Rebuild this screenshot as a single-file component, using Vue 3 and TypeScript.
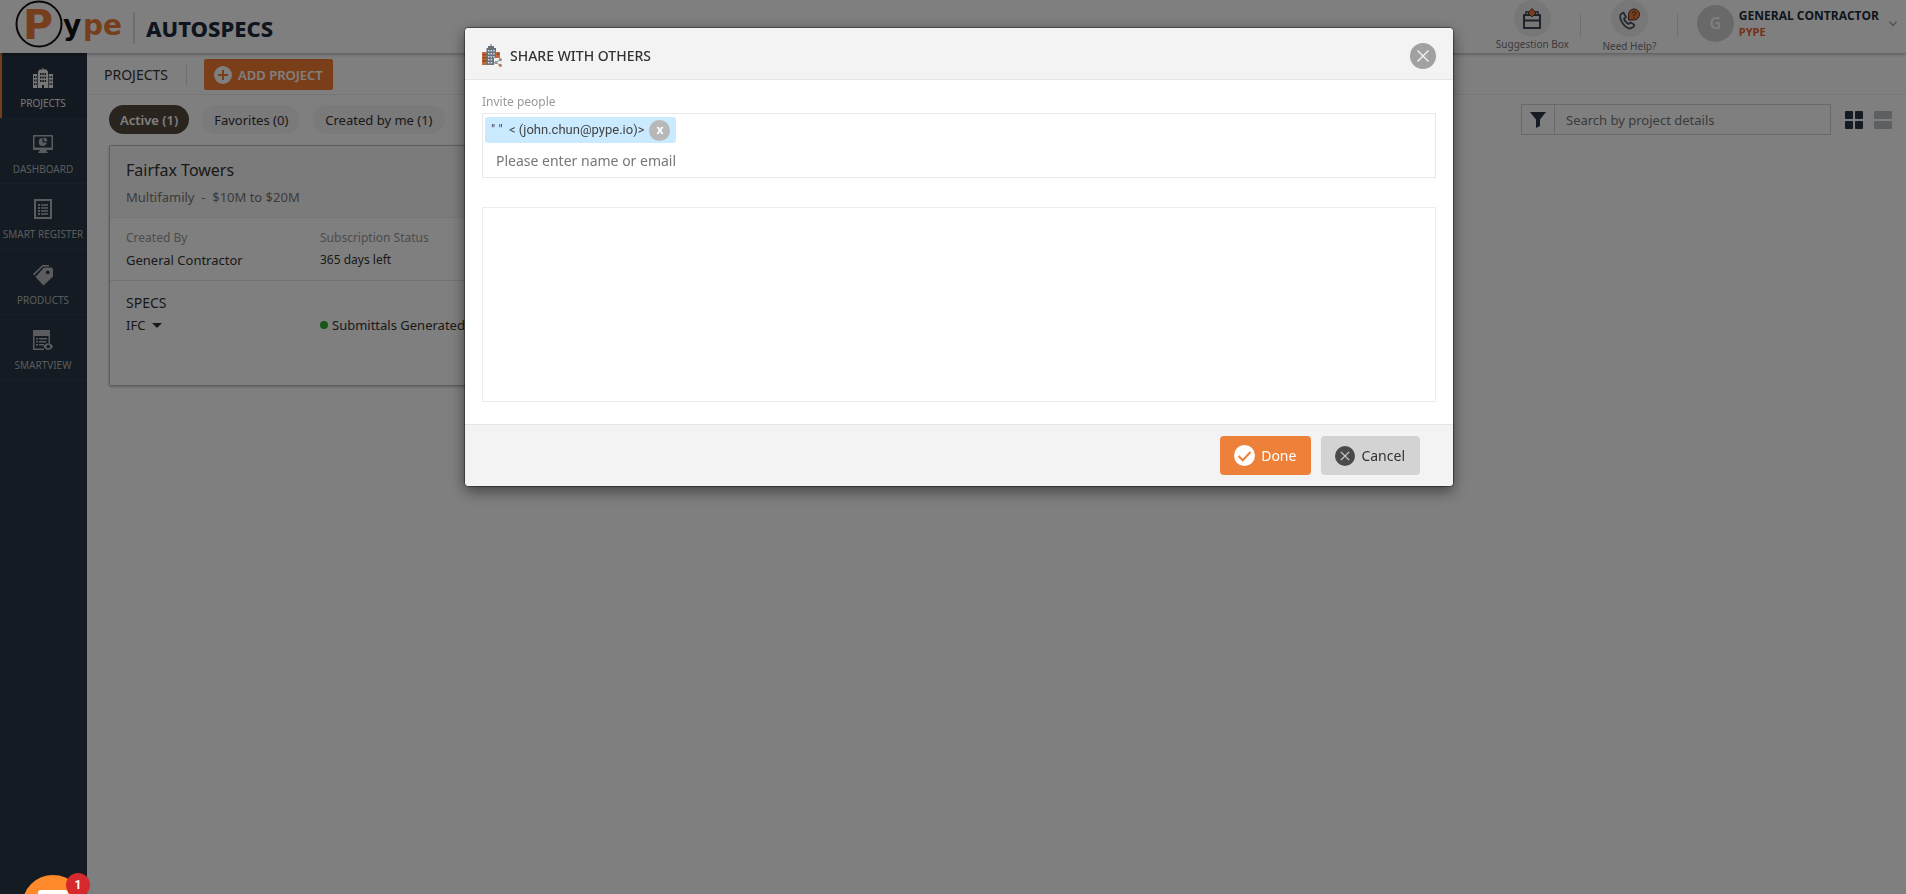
<script setup lang="ts">
import { ref } from 'vue'

interface NavItem {
  id: string
  label: string
}

const navItems: NavItem[] = [
  { id: 'projects', label: 'PROJECTS' },
  { id: 'dashboard', label: 'DASHBOARD' },
  { id: 'register', label: 'SMART REGISTER' },
  { id: 'products', label: 'PRODUCTS' },
  { id: 'smartview', label: 'SMARTVIEW' },
]
const activeNav = ref('projects')

const filters = ['Active (1)', 'Favorites (0)', 'Created by me (1)']
const activeFilter = ref('Active (1)')

const search = ref('')
const invitee = ref('')
const message = ref('')
const people = ref<string[]>(['" "\u00a0 < (john.chun@pype.io)>'])
const open = ref(true)

function removePerson(index: number): void {
  people.value.splice(index, 1)
}
</script>

<template>
  <div class="app">
    <header class="topbar">
      <a class="logo" href="#" aria-label="Pype">
        <svg width="110" height="52" viewBox="0 0 110 52">
          <circle cx="24" cy="24" r="22.5" fill="#fff" stroke="#111" stroke-width="2" />
          <text x="8" y="39" class="logo-p">P</text>
          <text x="48" y="35" class="logo-y">y</text>
          <text x="68" y="35" class="logo-pe">pe</text>
        </svg>
      </a>
      <span class="brand">AUTOSPECS</span>
      <div class="top-actions">
        <button class="top-action suggestion" type="button">
          <span class="round">
            <svg width="20" height="22" viewBox="0 0 20 22" fill="none" stroke="#3a4654" stroke-width="2">
              <path d="M2 7h16v13H2z M2 12.500h16" stroke-linejoin="round" />
              <path d="M4 7V4h12v3" stroke-width="1.500" />
              <path d="M10 0.500l4 4.500-4 4-4-4z" fill="#ed7d3a" stroke="#5a3a2a" stroke-width="1" />
            </svg>
          </span>
          <span>Suggestion Box</span>
        </button>
        <button class="top-action help" type="button">
          <span class="round">
            <svg width="22" height="22" viewBox="0 0 22 22" fill="none">
              <path
                d="M5.500 4.500L2.500 6.500C1 11 6 20 12.500 20.500L16 18.500V16.500L12.500 14.500L10.500 16C8.500 15 6.500 12.500 6 10.500L8 9Z"
                stroke="#4a5563" stroke-width="1.800" stroke-linejoin="round" />
              <path d="M10.500 12V6.500A5.500 5.500 0 1 1 16 12z" fill="#ed7d3a" stroke="#4a3a34" stroke-width="1" />
              <path d="M14.500 5.200c0-2.200 3.200-2.200 3.200 0 0 1.300-1.600 1.100-1.600 2.600M16.100 9v1.200" stroke="#3a2a24" />
            </svg>
          </span>
          <span>Need Help?</span>
        </button>
        <button class="account" type="button">
          <span class="avatar">G</span>
          <span class="who"><b>GENERAL CONTRACTOR</b><em>PYPE</em></span>
          <svg width="10" height="8" viewBox="0 0 10 8" fill="none" stroke="#aaa" stroke-width="1.500">
            <path d="M1.500 1.500L5 5.500L8.500 1.500" />
          </svg>
        </button>
      </div>
    </header>

    <div class="shell">
      <nav class="sidebar">
        <div class="nav-list">
          <a v-for="item in navItems" :key="item.id" href="#" class="nav-item" :class="{ on: item.id === activeNav }"
            @click.prevent="activeNav = item.id">
            <svg width="20" height="20" viewBox="0 0 20 20">
              <g v-if="item.id === 'projects'" fill="currentColor" fill-rule="evenodd">
                <path
                  d="M9.500 0h1v1.500h3.500v1.500h1V20H11v-3H9v3H5V3h1V1.500h3.500z M7 5v2h1.500V5z M9.300 5v2h1.500V5z M11.600 5v2h1.500V5z M7 8.500v2h1.500v-2z M9.300 8.500v2h1.500v-2z M11.600 8.500v2h1.500v-2z M7 12v2h1.500v-2z M9.300 12v2h1.500v-2z M11.600 12v2h1.500v-2z" />
                <path d="M0 6h4.300v14H0z M1 8v2h1v-2z M2.700 8v2h1v-2z M1 11.500v2h1v-2z M2.700 11.500v2h1v-2z M1 15v2h1v-2z M2.700 15v2h1v-2z" />
                <path d="M15.700 6H20v14h-4.300z M16.500 8v2h1v-2z M18.200 8v2h1v-2z M16.500 11.500v2h1v-2z M18.200 11.500v2h1v-2z M16.500 15v2h1v-2z M18.200 15v2h1v-2z" />
              </g>
              <g v-else-if="item.id === 'dashboard'" fill="currentColor">
                <path fill-rule="evenodd" d="M1 1h18a1 1 0 0 1 1 1v13a1 1 0 0 1-1 1H1a1 1 0 0 1-1-1V2a1 1 0 0 1 1-1z M1.500 2.500v11h17v-11z" />
                <path d="M9.500 4a4 4 0 1 0 4.200 4.500H9.500z M10.700 3.500V7.300h3.700A4 4 0 0 0 10.700 3.500z M7 16h6l2 3H5z" />
              </g>
              <g v-else-if="item.id === 'register'" fill="currentColor">
                <path fill-rule="evenodd" d="M1 0h18v20H1z M3 2v16h14V2z" />
                <path d="M5 5h2v2H5z M8 5.300h7v1.400H8z M5 8h2v2H5z M8 8.300h7v1.400H8z M5 11h2v2H5z M8 11.300h7v1.400H8z M5 14h2v2H5z M8 14.300h7v1.400H8z" />
              </g>
              <g v-else-if="item.id === 'products'" fill="currentColor">
                <path fill-rule="evenodd" d="M11 2.500h7.500L20 4v7.500L10.500 20.500L2.500 12z M14.700 5.500a1.900 1.900 0 1 0 .1 0z" />
                <path d="M9.500 0H16v1.400h-5.800L1.800 9.800L2.500 11.200L0 9z" />
              </g>
              <g v-else fill="currentColor">
                <path fill-rule="evenodd" d="M0 0h17v13h-1.500V6h-14v12.500H11V20H0z" />
                <path d="M3 8h2v1.600H3z M6 8h8v1.600H6z M3 11h2v1.600H3z M6 11h7v1.600H6z M3 14h2v1.600H3z M6 14h5v1.600H6z" />
                <path fill-rule="evenodd" d="M10.500 16.500c2-4.500 7.500-4.500 9.500 0c-2 4.500-7.500 4.500-9.500 0z M15.200 14.700a1.800 1.800 0 1 0 .1 0z" />
              </g>
            </svg>
            <span>{{ item.label }}</span>
          </a>
        </div>
      </nav>

      <main class="main">
        <div class="subbar">
          <h1>PROJECTS</h1>
          <button class="add" type="button">
            <svg width="18" height="18" viewBox="0 0 18 18">
              <circle cx="9" cy="9" r="9" fill="#fff" />
              <path d="M9 4v10M4 9h10" stroke="#ed7d3a" stroke-width="2" />
            </svg>
            ADD PROJECT
          </button>
        </div>

        <div class="tools">
          <div class="pills">
            <button v-for="name in filters" :key="name" type="button" class="pill" :class="{ on: name === activeFilter }"
              @click="activeFilter = name">{{ name }}</button>
          </div>
          <div class="find">
            <div class="search">
              <button type="button" aria-label="Filter">
                <svg width="16" height="16" viewBox="0 0 16 16"><path d="M0 0h16L10 7.500V14l-4 2V7.500z" fill="#283646" /></svg>
              </button>
              <input v-model="search" type="text" placeholder="Search by project details" aria-label="Search projects" />
            </div>
            <button class="view" type="button" aria-label="Grid view">
              <svg width="18" height="18" viewBox="0 0 18 18" fill="#283646">
                <rect width="8" height="8" rx="1" /><rect x="10" width="8" height="8" rx="1" />
                <rect y="10" width="8" height="8" rx="1" /><rect x="10" y="10" width="8" height="8" rx="1" />
              </svg>
            </button>
            <button class="view" type="button" aria-label="List view">
              <svg width="18" height="18" viewBox="0 0 18 18" fill="#bbbfc3">
                <rect width="18" height="8" rx="1" /><rect y="10" width="18" height="8" rx="1" />
              </svg>
            </button>
          </div>
        </div>

        <article class="card">
          <div class="card-head">
            <h2>Fairfax Towers</h2>
            <p>Multifamily&nbsp; -&nbsp; $10M to $20M</p>
          </div>
          <dl class="meta">
            <div><dt>Created By</dt><dd>General Contractor</dd></div>
            <div><dt>Subscription Status</dt><dd class="small">365 days left</dd></div>
          </dl>
          <h3>SPECS</h3>
          <div class="spec">
            <button type="button">IFC <i class="caret"></i></button>
            <span class="status"><i class="dot"></i>Submittals Generated</span>
          </div>
        </article>
      </main>
    </div>

    <div v-if="open" class="overlay">
      <form class="modal" role="dialog" aria-labelledby="share-title" @submit.prevent="open = false">
        <header class="modal-head">
          <svg width="20" height="23" viewBox="0 0 20 23">
            <path d="M0 8h6v13H0z M13 8h5v6h-5z" fill="#c5693a" />
            <path d="M1 10h1.500v1.500H1z M3.300 10h1.500v1.500H3.300z M1 13h1.500v1.500H1z M3.300 13h1.500v1.500H3.300z M1 16h1.500v1.500H1z M3.300 16h1.500v1.500H3.300z M15 9.500h2V11h-2z" fill="#5b4238" />
            <path d="M8.500 0h1v2H12v2h2v17H4.500V4H6V2h2.500z" fill="#67727d" />
            <path d="M6 6h1.500v1.500H6z M8.600 6h1.500v1.500H8.600z M11.200 6h1.500v1.500h-1.500z M6 9h1.500v1.500H6z M8.600 9h1.500v1.500H8.600z M11.200 9h1.500v1.500h-1.500z M6 12h1.500v1.500H6z M8.600 12h1.500v1.500H8.600z M11.200 12h1.500v1.500h-1.500z M6 15h1.500v1.500H6z M8.600 15h1.500v1.500H8.600z M6 18h1.500v1.500H6z M8.600 18h1.500v1.500H8.600z" fill="#d5dade" />
            <path d="M12 14h8v9h-8z" fill="#f3f3f3" />
            <path d="M18.500 15.500L14 18.500L18.500 21.500" fill="none" stroke="#999" />
            <circle cx="18.300" cy="15.700" r="1.600" fill="#8b9095" /><circle cx="13.800" cy="18.500" r="1.600" fill="#8b9095" /><circle cx="18.300" cy="21.300" r="1.600" fill="#b37a5d" />
          </svg>
          <h2 id="share-title">SHARE WITH OTHERS</h2>
          <button class="close" type="button" aria-label="Close" @click="open = false">
            <svg width="26" height="26" viewBox="0 0 26 26">
              <circle cx="13" cy="13" r="13" fill="#a1a1a1" />
              <path d="M7.500 7.500l11 11M18.500 7.500l-11 11" stroke="#f3f3f3" stroke-width="1.400" />
            </svg>
          </button>
        </header>
        <div class="modal-body">
          <label for="invite">Invite people</label>
          <div class="tags">
            <span v-for="(person, i) in people" :key="person" class="tag">
              {{ person }}
              <button type="button" aria-label="Remove" @click="removePerson(i)">x</button>
            </span>
            <input id="invite" v-model="invitee" type="text" placeholder="Please enter name or email" />
          </div>
          <textarea v-model="message" aria-label="Message"></textarea>
        </div>
        <footer class="modal-foot">
          <button class="btn done" type="submit">
            <svg width="21" height="21" viewBox="0 0 21 21">
              <circle cx="10.500" cy="10.500" r="10.500" fill="#fff" />
              <path d="M4.500 11l4.200 4.200L16.500 7" fill="none" stroke="#ed813a" stroke-width="2" />
            </svg>
            Done
          </button>
          <button class="btn cancel" type="button" @click="open = false">
            <svg width="20" height="20" viewBox="0 0 20 20">
              <circle cx="10" cy="10" r="10" fill="#4a4a4a" />
              <path d="M5.800 5.800l8.400 8.400M14.200 5.800l-8.400 8.400" stroke="#d3d3d3" stroke-width="1.200" />
            </svg>
            Cancel
          </button>
        </footer>
      </form>
    </div>

    <button class="chat" type="button" aria-label="Open chat">
      <svg width="62" height="62" viewBox="0 0 62 62">
        <circle cx="31" cy="31" r="31" fill="#ff8a2b" />
        <rect x="16" y="15" width="30" height="26" rx="3" fill="#fff" />
      </svg>
      <span class="badge">1</span>
    </button>
  </div>
</template>

<style>
html,
body {
  overflow: hidden;
}
</style>

<style scoped>
* {
  box-sizing: border-box;
}

.app {
  display: flex;
  flex-direction: column;
  min-height: 100vh;
  background: #fff;
  color: #333;
  font: 13px/18px "Noto Sans", "Open Sans", sans-serif;
}

h1,
h2,
h3,
p,
dl,
dd {
  margin: 0;
  font-weight: 400;
}

button {
  padding: 0;
  border: 0;
  background: none;
  color: inherit;
  font: inherit;
  cursor: pointer;
}

a {
  color: inherit;
  text-decoration: none;
}

svg {
  display: block;
  flex: none;
}

.topbar {
  position: relative;
  display: flex;
  align-items: flex-start;
  height: 53px;
  padding: 0 8px 0 15px;
  background: #fff;
  box-shadow: 0 1px 4px rgba(0, 0, 0, 0.35);
}

.logo-p,
.logo-y,
.logo-pe {
  fill: #ed7d3a;
  font-family: "DejaVu Sans", sans-serif;
  font-size: 41px;
  font-weight: 700;
}

.logo-y,
.logo-pe {
  font-size: 28px;
}

.logo-y {
  fill: #111;
}

.brand {
  margin: 12px 0 0 8px;
  padding-left: 11px;
  border-left: 2px solid #ddd;
  color: #1e2a3c;
  font-size: 22px;
  font-weight: 800;
  line-height: 32px;
}

.top-actions {
  display: flex;
  margin-left: auto;
}

.top-action {
  display: flex;
  flex-direction: column;
  align-items: center;
  position: relative;
  width: 97px;
  color: #777;
  font-size: 10px;
  line-height: 14px;
}

.top-action::after {
  content: "";
  position: absolute;
  top: 14px;
  right: 0;
  height: 22px;
  border-right: 1px solid #ddd;
}

.round {
  display: grid;
  place-items: center;
  width: 37px;
  height: 37px;
  border-radius: 50%;
  background: #eee;
}

.help .round {
  margin-bottom: 2px;
}

.account {
  display: flex;
  align-items: center;
  gap: 5px;
  height: 37px;
  margin: 5px 0 0 19px;
  text-align: left;
}

.account svg {
  margin-left: 4px;
}

.avatar {
  width: 37px;
  border-radius: 50%;
  background: #d3d3d3;
  color: #fff;
  font-size: 16px;
  font-weight: 600;
  line-height: 37px;
  text-align: center;
}

.who {
  display: flex;
  flex-direction: column;
  font-family: "Open Sans", sans-serif;
  font-size: 12px;
  line-height: 16px;
}

.who b {
  color: #222b38;
  font-weight: 700;
}

.who em {
  color: #e8622c;
  font-size: 11px;
  font-style: normal;
  font-weight: 700;
}

.shell {
  display: flex;
  flex: 1;
}

.sidebar {
  width: 87px;
  background: #283644;
}

.nav-list {
  display: grid;
  grid-template-rows: repeat(5, 1fr);
  height: 328px;
}

.nav-item {
  display: flex;
  flex-direction: column;
  align-items: center;
  gap: 6px;
  padding: 15px 1px 0 0;
  border-bottom: 1px solid #303f4f;
  color: #b4b8bc;
  font-size: 10px;
  white-space: nowrap;
}

.nav-item.on {
  box-shadow: inset 2px 0 #ed7d3a;
  background: #253341;
  color: #eee;
}

.main {
  flex: 1;
  min-width: 0;
}

.subbar {
  display: flex;
  align-items: center;
  height: 42px;
  padding: 2px 0 0 17px;
  border-bottom: 1px solid #eee;
}

.subbar h1 {
  margin-right: 17px;
  padding-right: 18px;
  border-right: 1px solid #ddd;
  font-size: 14px;
  line-height: 22px;
}

.add {
  display: flex;
  align-items: center;
  gap: 6px;
  height: 31px;
  padding: 0 10px;
  border-radius: 2px;
  background: #f47d33;
  color: #fff;
  font-weight: 600;
}

.tools {
  display: flex;
  align-items: center;
  justify-content: space-between;
  padding: 9px 14px 10px 22px;
}

.pills {
  display: flex;
  gap: 13px;
}

.pill {
  height: 29px;
  padding: 0 12px;
  border-radius: 15px;
  background: #f4f4f4;
}

.pill.on {
  padding: 0 11px;
  background: #54483f;
  color: #fff;
  font-weight: 600;
}

.find {
  display: flex;
  align-items: center;
  gap: 11px;
}

.search {
  display: flex;
  width: 310px;
  height: 31px;
  margin-right: 3px;
  border: 1px solid #d3d3d3;
}

.search button {
  display: grid;
  place-items: center;
  width: 33px;
  border-right: 1px solid #d3d3d3;
}

.search input {
  flex: 1;
  min-width: 0;
  padding: 0 11px;
  border: 0;
  background: none;
  font: inherit;
}

.search input::placeholder {
  color: #777;
}

.card {
  width: 560px;
  height: 241px;
  margin-left: 22px;
  border: 1px solid #bbb;
  border-radius: 2px;
  box-shadow: 0 1px 3px rgba(0, 0, 0, 0.25);
}

.card-head {
  height: 72px;
  padding: 14px 16px;
  border-bottom: 1px solid #eee;
  background: #f6f6f6;
}

.card-head h2 {
  margin-bottom: 7px;
  font-size: 16px;
  line-height: 21px;
}

.card-head p {
  color: #777;
}

.meta {
  display: flex;
  height: 63px;
  padding: 11px 16px;
  border-bottom: 1px solid #e5e5e5;
}

.meta > div {
  width: 194px;
}

.meta dt {
  margin-bottom: 4px;
  color: #999;
  font-size: 12px;
}

.small {
  font-size: 12px;
}

.card h3 {
  margin: 13px 16px 4px;
  font-size: 14px;
}

.spec {
  display: flex;
  padding: 0 16px;
}

.spec button {
  width: 194px;
  text-align: left;
}

.caret {
  display: inline-block;
  margin: 0 0 2px 3px;
  border: 5px solid transparent;
  border-top-color: #333;
  border-bottom: 0;
}

.status {
  display: flex;
  align-items: center;
  gap: 4px;
}

.dot {
  width: 8px;
  height: 8px;
  border-radius: 50%;
  background: #2cae2c;
}

.overlay {
  position: fixed;
  inset: 0;
  display: flex;
  align-items: flex-start;
  justify-content: center;
  padding: 28px 0 0 12px;
  background: rgba(0, 0, 0, 0.5);
}

.modal {
  width: min(988px, 100% - 40px);
  border-radius: 4px;
  background: #fff;
  box-shadow: 0 0 1px 1px rgba(0, 0, 0, 0.4), 0 5px 15px rgba(0, 0, 0, 0.5);
}

.modal-head {
  display: flex;
  align-items: center;
  gap: 8px;
  height: 52px;
  padding: 4px 17px 0;
  border-bottom: 1px solid #e5e5e5;
  border-radius: 4px 4px 0 0;
  background: #f3f3f3;
}

.modal-head h2 {
  font-size: 14px;
  font-weight: 500;
}

.close {
  margin-left: auto;
}

.modal-body {
  padding: 13px 17px 22px;
}

.modal-body label {
  display: block;
  margin-bottom: 2px;
  color: #999;
  font-size: 12px;
}

.tags {
  margin-bottom: 29px;
  padding: 3px 2px;
  border: 1px solid #e9e9e9;
}

.tag {
  display: inline-flex;
  align-items: center;
  gap: 5px;
  height: 26px;
  padding: 0 6px;
  border-radius: 3px;
  background: #c9eaff;
  color: #444;
  font-family: Roboto, sans-serif;
  vertical-align: top;
}

.tag button {
  width: 21px;
  height: 21px;
  border-radius: 50%;
  background: #b8b8b8;
  color: #fff;
  font: 700 12px/20px "Noto Sans", sans-serif;
}

.tags input {
  display: block;
  width: 100%;
  height: 31px;
  padding: 4px 11px 0;
  border: 0;
  background: none;
  font: inherit;
  font-size: 14px;
}

.tags input::placeholder {
  color: #777;
}

textarea {
  display: block;
  width: 100%;
  height: 195px;
  border: 1px solid #ececec;
  resize: none;
  font: inherit;
}

.modal-foot {
  display: flex;
  justify-content: flex-end;
  gap: 10px;
  padding: 11px 33px 11px 0;
  border-top: 1px solid #e5e5e5;
  border-radius: 0 0 4px 4px;
  background: #f3f3f3;
}

.btn {
  display: flex;
  align-items: center;
  gap: 6px;
  height: 39px;
  padding: 0 15px 0 14px;
  border-radius: 4px;
  font-size: 14px;
}

.done {
  background: #ed813a;
  color: #fff;
}

.cancel {
  background: #d3d3d3;
}

.chat {
  position: fixed;
  left: 22px;
  bottom: -43px;
}

.badge {
  position: absolute;
  top: -2px;
  right: -6px;
  width: 24px;
  height: 24px;
  border-radius: 50%;
  background: #d5292d;
  color: #fff;
  font: 700 12px/24px Roboto, sans-serif;
}
</style>
